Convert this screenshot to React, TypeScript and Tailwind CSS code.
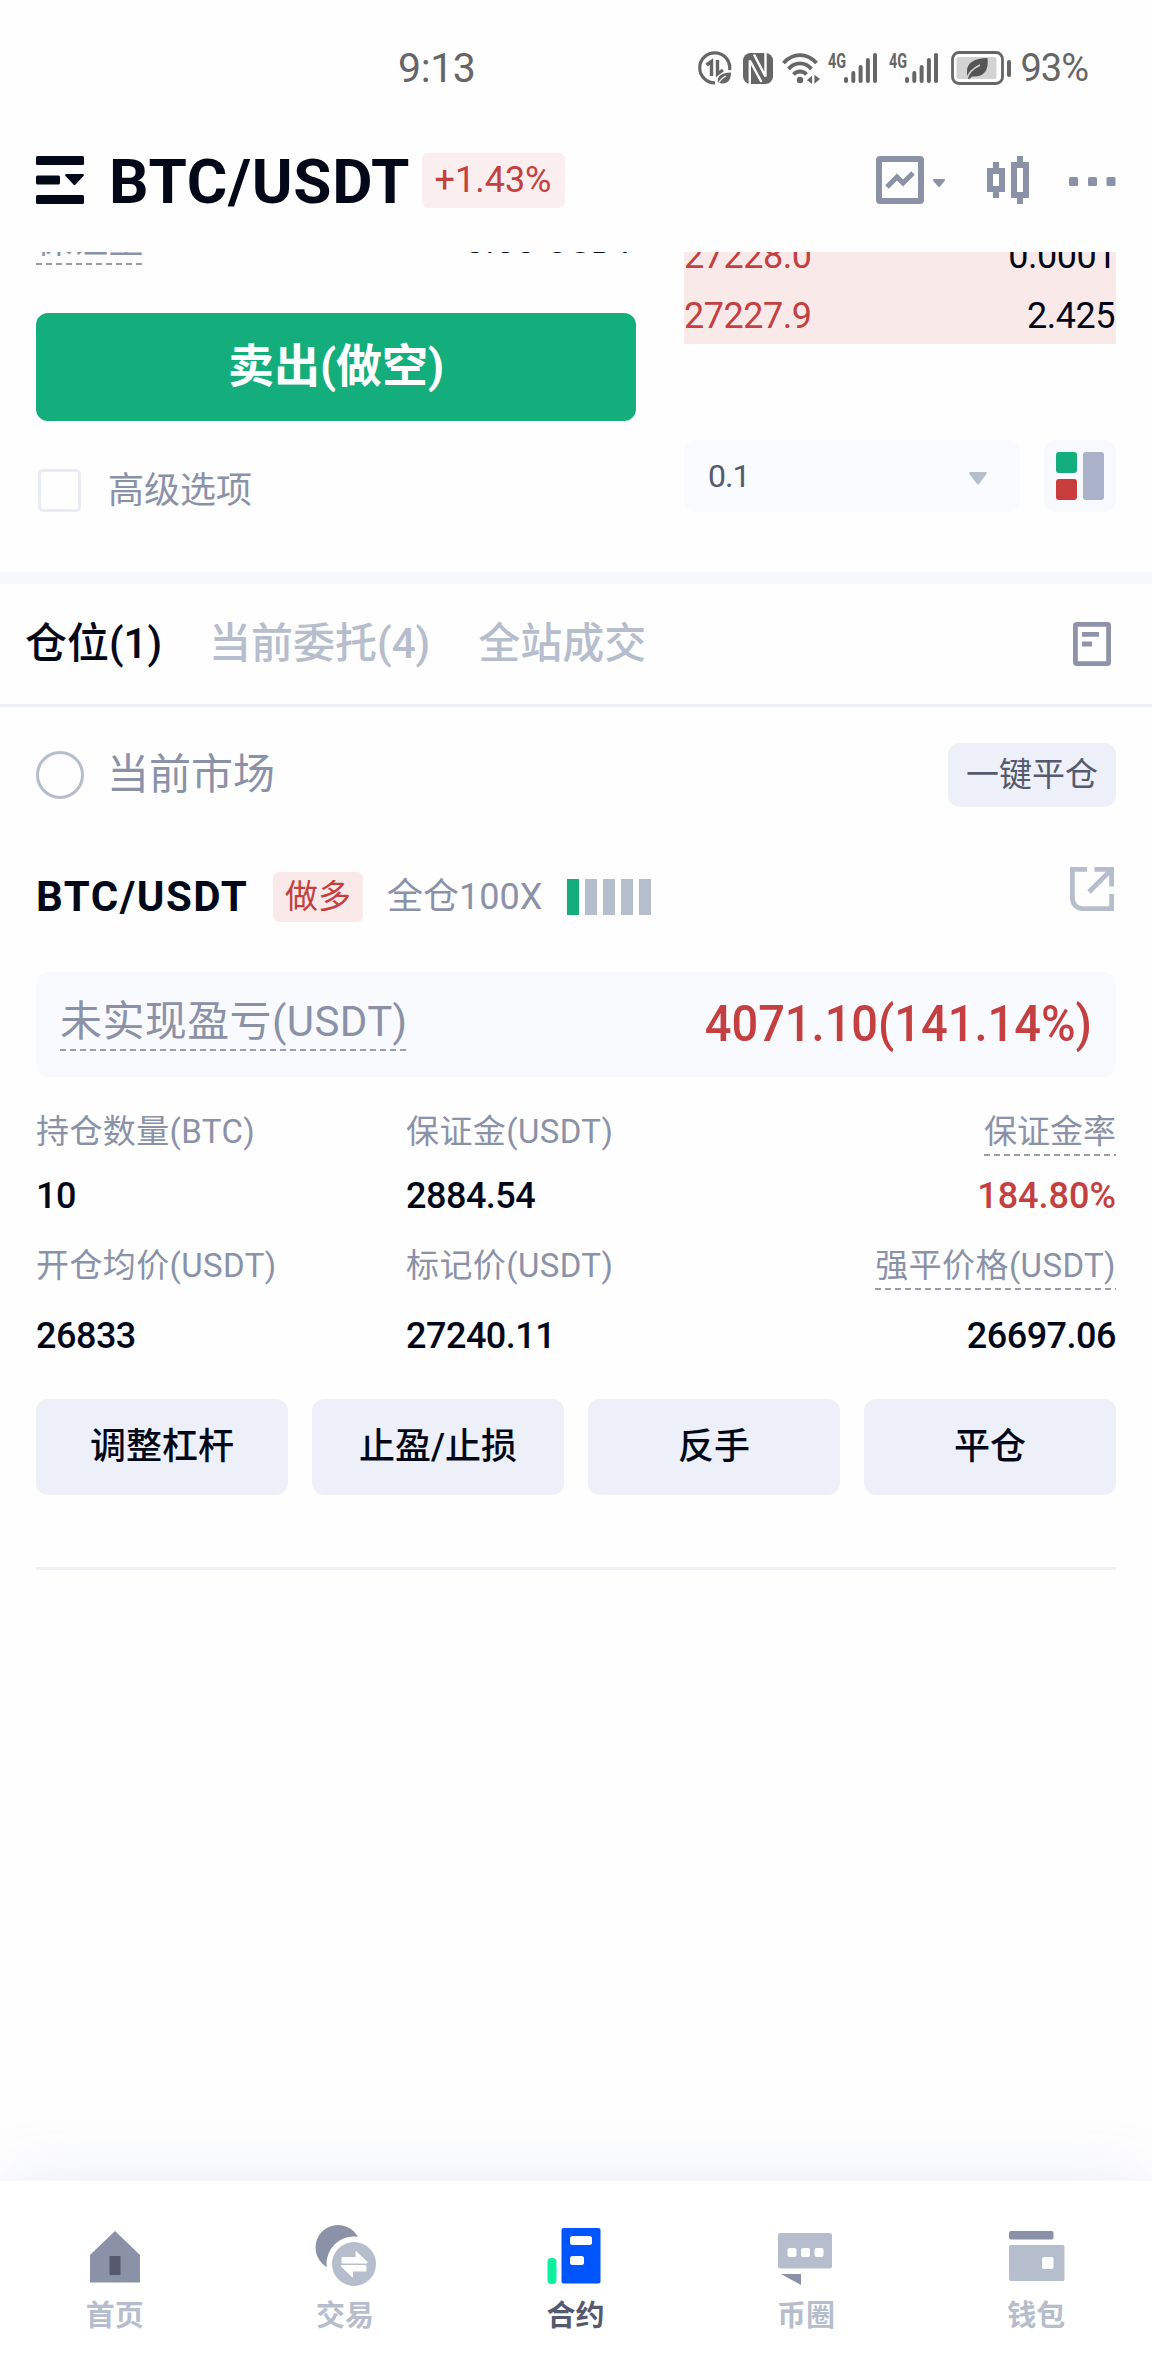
import React from 'react';

interface Stat {
  label: string;
  value: string;
  hint?: boolean;
  red?: boolean;
}

const STATS: Stat[] = [
  { label: '持仓数量(BTC)', value: '10' },
  { label: '保证金(USDT)', value: '2884.54' },
  { label: '保证金率', value: '184.80%', hint: true, red: true },
  { label: '开仓均价(USDT)', value: '26833' },
  { label: '标记价(USDT)', value: '27240.11' },
  { label: '强平价格(USDT)', value: '26697.06', hint: true },
];

const ACTIONS = ['调整杠杆', '止盈/止损', '反手', '平仓'];

const DashedLine: React.FC = () => (
  <div className="h-[2px] w-full bg-[repeating-linear-gradient(90deg,#979cae_0_6px,transparent_6px_10px)]" />
);

const SignalIcon: React.FC = () => (
  <div className="flex">
    <span className="-mt-px h-[20px] w-[16px] origin-left scale-x-[0.72] text-[20px] font-bold leading-[20px]">4G</span>
    <svg width="34" height="32" viewBox="16 0 34 32" fill="#666">
      <rect x="16" y="25" width="4" height="6" rx="2" />
      <rect x="23.3" y="19" width="4" height="12" rx="2" />
      <rect x="30.6" y="13" width="4" height="18" rx="2" />
      <rect x="37.9" y="6" width="4" height="25" rx="2" />
      <rect x="45" y="1" width="4" height="30" rx="2" />
    </svg>
  </div>
);

const StatusBar: React.FC = () => (
  <div className="flex h-[136px] items-center justify-between pl-[398px] pr-[64px] text-[#666]">
    <span className="text-[41px] leading-none tracking-[-0.4px]">9:13</span>
    <div className="flex items-center">
      <svg width="34" height="34" viewBox="0 0 34 34" fill="none" stroke="#666" strokeWidth="3.2">
        <path d="M17 31.8A15 15 0 1 1 31.6 19" />
        <path d="M8.5 14l5-3.5V25M19.5 9v14l5.5-4" strokeWidth="3.4" />
        <path d="M20 31.5c-1.5-7 4-9.5 13-10c0 7-3 11.5-9.5 11z" fill="#666" stroke="none" />
        <path d="M20 33c2-4 5-6.5 8-8" stroke="#fff" strokeWidth="1.2" />
      </svg>
      <svg className="ml-[11px]" width="30" height="31" viewBox="0 0 30 31">
        <rect width="30" height="31" rx="7.5" fill="#666" />
        <path d="M6.8 31V7.5L18.5 29M22.5 0v23.5L11 1.5" fill="none" stroke="#fff" strokeWidth="2.4" />
      </svg>
      <svg className="ml-[9px]" width="38" height="32" viewBox="0 0 38 32" fill="none" stroke="#666" strokeWidth="3.8">
        <path d="M1.5 11C11 0.5 25 0.5 34.5 11" />
        <path d="M6.5 17C13 9.5 23 9.5 29.5 17" />
        <path d="M11.5 22.5C15 18.5 21 18.5 24.5 22.5" />
        <circle cx="18" cy="28" r="3.2" fill="#666" stroke="none" />
        <path d="M25.5 28.5l4-3.5v6.5M33 24v6.5l4-3.5z" fill="#666" strokeWidth="1.2" />
      </svg>
      <div className="ml-2 flex gap-[11px]">
        <SignalIcon />
        <SignalIcon />
      </div>
      <svg className="ml-[12px]" width="60" height="34" viewBox="0 0 60 34">
        <rect x="1.5" y="1.5" width="50" height="31" rx="6.5" fill="none" stroke="#666" strokeWidth="2.8" />
        <rect x="5.5" y="6" width="40" height="22" rx="2.5" fill="#d3d3d3" />
        <rect x="56" y="9" width="4" height="17" rx="2" fill="#666" />
        <path d="M36.5 7c-13 0-21 5-20.5 14l0 7c3 0 4-1.5 5-2.5c11 1 17-5 15.5-18.5z" fill="#555" />
        <path d="M16 28c1-6 6-10.5 13-14" fill="none" stroke="#d3d3d3" strokeWidth="1.5" />
      </svg>
      <span className="ml-[9px] text-[38px] leading-none tracking-[-1px]">93%</span>
    </div>
  </div>
);

const Header: React.FC = () => (
  <header className="flex h-[116px] items-center px-9 pb-7">
    <svg width="48" height="48" viewBox="0 0 48 48" fill="#030818">
      <rect width="48" height="9" rx="1.5" />
      <rect y="19.5" width="24" height="9" rx="1.5" />
      <rect y="39" width="48" height="9" rx="1.5" />
      <path d="M30 18h17q1.5 .5 .5 2l-8 8.6q-1 1-2 0l-8-8.6q-1-1.5 .5-2z" />
    </svg>
    <h1 className="ml-[25px] w-[302px] pt-[3px] text-[62px] font-bold leading-none tracking-[0.7px]">BTC/USDT</h1>
    <span className="ml-[11px] flex h-[55px] w-[143px] items-center justify-center rounded-md bg-[#faeeee] pr-px text-[36px] leading-none text-[#c43f40]">
      +1.43%
    </span>
    <div className="ml-auto flex items-center text-[#8b92a7]">
      <svg width="70" height="48" viewBox="0 0 70 48" fill="none" stroke="currentColor">
        <rect x="3" y="3" width="42" height="42" rx="1" strokeWidth="6" />
        <path d="M11 31l10-10 6 6 10-10" strokeWidth="5" />
        <path d="M58 24h10l-5 6z" fill="currentColor" strokeWidth="2" strokeLinejoin="round" />
      </svg>
      <svg className="ml-[41px]" width="42" height="48" viewBox="0 0 42 48" fill="none" stroke="currentColor" strokeWidth="6">
        <rect x="3" y="15" width="12" height="18" />
        <path d="M9 6v8M9 34v8M33 0v8M33 40v8" />
        <rect x="27" y="9" width="12" height="30" />
      </svg>
      <svg className="ml-10 mt-[3px]" width="47" height="9" viewBox="0 0 47 9" fill="currentColor">
        <rect width="9" height="9" rx="1.5" />
        <rect x="19" width="9" height="9" rx="1.5" />
        <rect x="37.5" width="9" height="9" rx="1.5" />
      </svg>
    </div>
  </header>
);

const OrderPanel: React.FC = () => (
  <section className="flex h-[320px] justify-between overflow-hidden px-9">
    <div className="w-[600px]">
      <div className="-mt-[31px] flex justify-between text-[36px] leading-[40px]">
        <div className="text-[#8b92a7]">
          保证金
          <div className="mt-[2px]">
            <DashedLine />
          </div>
        </div>
        <span className="tracking-[0.3px]">0.00 USDT</span>
      </div>
      <button className="mt-12 flex h-[108px] w-full items-center justify-center rounded-xl bg-[#13ae7c] pb-[3px] text-[46px] font-bold leading-none text-white">
        卖出(做空)
      </button>
      <label className="mt-12 flex items-center text-[36px] leading-[42px] text-[#8b92a7]">
        <span className="ml-[2px] h-[43px] w-[43px] rounded-[5px] border-[3px] border-[#e9ecf4]" />
        <span className="ml-[27px]">高级选项</span>
      </label>
    </div>
    <div className="w-[432px]">
      <div className="-mt-7 bg-[#f9eae9] text-[36px] leading-[56px] tracking-[-0.5px]">
        <div className="flex justify-between pt-1">
          <span className="text-[#c43f40]">27228.0</span>
          <span>0.0001</span>
        </div>
        <div className="flex justify-between pt-1">
          <span className="text-[#c43f40]">27227.9</span>
          <span className="pr-px">2.425</span>
        </div>
      </div>
      <div className="mt-24 flex justify-between">
        <div className="flex h-[72px] w-[336px] items-center justify-between rounded-xl bg-[#f9fbfe] px-6 text-[32px] tracking-[-1px] text-[#565a6e]">
          0.1
          <svg className="mr-[9px] mt-1" width="18" height="13" viewBox="0 0 18 13" fill="#b6bdcc">
            <path d="M1 0h16q1.5 .5 .5 2l-7.5 10q-1 1-2 0l-7.5-10q-1-1.5 .5-2z" />
          </svg>
        </div>
        <div className="flex h-[72px] w-[72px] gap-[6px] rounded-xl bg-[#f8f9fc] p-3">
          <div className="flex flex-col gap-[6px]">
            <div className="h-[21px] w-[21px] rounded-[3px] bg-[#13ae7c]" />
            <div className="h-[21px] w-[21px] rounded-[3px] bg-[#c93c3c]" />
          </div>
          <div className="h-12 w-[21px] rounded-[3px] bg-[#abb3cb]" />
        </div>
      </div>
    </div>
  </section>
);

const Tabs: React.FC = () => (
  <nav className="flex h-[123px] items-center border-b-[3px] border-[#edeff7] pl-[25px] pr-[41px] text-[42px] font-medium leading-none text-[#b6bdcc]">
    <span className="text-[#030818]">仓位(1)</span>
    <span className="ml-[47px]">当前委托(4)</span>
    <span className="ml-[48px]">全站成交</span>
    <svg className="ml-auto" width="38" height="44" viewBox="0 0 38 44" fill="none" stroke="#8e93a7" strokeWidth="4.8">
      <rect x="2.4" y="2.4" width="33.2" height="39.2" rx="1" />
      <path d="M9 12.3h17M9 22h10" />
    </svg>
  </nav>
);

const Position: React.FC = () => (
  <section className="px-9">
    <div className="mt-9 flex h-16 items-center">
      <span className="h-12 w-12 rounded-full border-[3px] border-[#b6bdcc]" />
      <span className="ml-[23px] text-[42px] leading-none text-[#8b92a7]">当前市场</span>
      <button className="ml-auto h-16 w-[168px] rounded-xl bg-[#edf0f9] pb-[2px] text-[33px] leading-none text-[#565a6e]">
        一键平仓
      </button>
    </div>

    <div className="mt-[60px] flex h-[60px] items-center">
      <h2 className="w-[237px] text-[42px] font-bold leading-none tracking-[1.5px]">BTC/USDT</h2>
      <span className="flex h-[50px] w-[90px] items-center justify-center rounded-md bg-[#f9eae9] pb-[2px] text-[33px] leading-none text-[#c43f40]">
        做多
      </span>
      <span className="ml-6 text-[36px] leading-none text-[#8b92a7]">全仓100X</span>
      <div className="ml-[25px] flex gap-[6px]">
        <div className="h-9 w-3 bg-[#13ae7c]" />
        <div className="h-9 w-3 bg-[#b6bdcc]" />
        <div className="h-9 w-3 bg-[#b6bdcc]" />
        <div className="h-9 w-3 bg-[#b6bdcc]" />
        <div className="h-9 w-3 bg-[#b6bdcc]" />
      </div>
      <svg className="ml-auto mr-[2px] self-start" width="44" height="44" viewBox="0 0 44 44" fill="none" stroke="#b6bdcc" strokeWidth="4.8">
        <path d="M17 2.4H2.4V32q1 8.500 9.5 9.6H41.6V27" />
        <path d="M24.5 2.4H41.6V19.5M41 3L19 25" />
      </svg>
    </div>

    <div className="mt-[45px] flex h-[105px] items-center justify-between rounded-xl bg-[#f9fafe] px-6 leading-none">
      <div className="pt-[3px] text-[42px] tracking-[0.4px] text-[#8b92a7]">
        未实现盈亏(USDT)
        <div className="mt-[6px]">
          <DashedLine />
        </div>
      </div>
      <span className="origin-right scale-x-[0.94] pb-[2px] text-[50px] font-medium text-[#c43f40]">4071.10(141.14%)</span>
    </div>

    <div className="mt-[35px] grid grid-cols-[370px_1fr_auto] gap-y-[31px] leading-[40px]">
      {STATS.map((stat, i) => (
        <div key={stat.label} className={i % 3 === 2 ? 'flex flex-col items-end' : ''}>
          <div className={`h-[44px] text-[33px] text-[#8b92a7] ${stat.label.includes('(') ? 'tracking-[0.4px]' : ''}`}>
            {stat.label}
            {stat.hint && (
              <div className="mt-[2px]">
                <DashedLine />
              </div>
            )}
          </div>
          <div
            className={`pt-[2px] text-[36px] font-medium leading-[38px] ${i > 2 ? 'mt-[25px]' : 'mt-[19px]'} ${
              stat.red ? 'text-[#c43f40]' : 'tracking-[-0.5px]'
            }`}
          >
            {stat.value}
          </div>
        </div>
      ))}
    </div>

    <div className="mt-11 grid grid-cols-4 gap-6">
      {ACTIONS.map((action) => (
        <button key={action} className="h-24 rounded-xl bg-[#edf0f9] text-[36px] font-medium leading-none">
          {action}
        </button>
      ))}
    </div>
    <div className="mt-[72px] h-[3px] bg-[#eff1f7]" />
  </section>
);

const HomeIcon: React.FC = () => (
  <svg width="64" height="64" viewBox="0 0 64 64">
    <path d="M32 11l25 24v27.5H7V35z" fill="#8b92a7" />
    <rect x="26.5" y="36" width="11" height="19" fill="#565a6e" />
  </svg>
);

const TradeIcon: React.FC = () => (
  <svg width="64" height="66" viewBox="0 0 64 66">
    <circle cx="24" cy="27.5" r="22.5" fill="#8b92a7" />
    <circle cx="40" cy="44" r="27.5" fill="#fff" />
    <circle cx="40" cy="44" r="22" fill="#b6bdcc" />
    <path
      d="M28 37.5h14v-6l11 10.5v1H28zM52 45.5v5.5H38.5v6l-11-10.5v-1z"
      fill="#fff"
      stroke="#fff"
      strokeLinejoin="round"
    />
  </svg>
);

const ContractIcon: React.FC = () => (
  <svg width="64" height="64" viewBox="0 0 64 64">
    <rect x="3.5" y="38" width="9" height="26" rx="4" fill="#0df09f" />
    <rect x="17.5" y="8" width="39" height="55.5" rx="2" fill="#0055ff" />
    <rect x="26" y="16" width="22" height="9" rx="2.5" fill="#fff" />
    <rect x="26" y="36" width="14" height="9" rx="2.5" fill="#fff" />
  </svg>
);

const ChatIcon: React.FC = () => (
  <svg width="64" height="66" viewBox="0 0 64 66">
    <rect x="4" y="13" width="54" height="35.5" rx="2.5" fill="#b6bdcc" />
    <path d="M7 54h20v11z" fill="#8b92a7" />
    <rect x="13.5" y="28" width="9" height="9" rx="2" fill="#fff" />
    <rect x="27" y="28" width="9" height="9" rx="2" fill="#fff" />
    <rect x="40.5" y="28" width="9" height="9" rx="2" fill="#fff" />
  </svg>
);

const WalletIcon: React.FC = () => (
  <svg width="64" height="64" viewBox="0 0 64 64">
    <rect x="4" y="11" width="44.5" height="8.5" rx="2" fill="#8b92a7" />
    <rect x="4" y="25" width="55.5" height="36" rx="2" fill="#b6bdcc" />
    <rect x="37" y="37" width="11.5" height="12" rx="2" fill="#fff" />
  </svg>
);

const NAV_ITEMS = [
  { label: '首页', Icon: HomeIcon },
  { label: '交易', Icon: TradeIcon },
  { label: '合约', Icon: ContractIcon, active: true },
  { label: '币圈', Icon: ChatIcon },
  { label: '钱包', Icon: WalletIcon },
];

const BottomNav: React.FC = () => (
  <footer className="mt-auto grid h-[195px] grid-cols-5 bg-white pt-[39px] shadow-[0_-6px_70px_-6px_rgba(90,110,190,0.12)]">
    {NAV_ITEMS.map(({ label, Icon, active }) => (
      <div key={label} className="flex flex-col items-center">
        <div className="h-[82px]">
          <Icon />
        </div>
        <span className={`mr-px text-[29px] font-bold leading-none ${active ? 'text-[#565a6e]' : 'text-[#b6bdcc]'}`}>
          {label}
        </span>
      </div>
    ))}
  </footer>
);

const App: React.FC = () => {
  return (
    <div className="flex h-[2376px] w-[1152px] flex-col overflow-hidden bg-[#fefefe] font-[Roboto,'Noto_Sans_CJK_SC',sans-serif] text-[#030818]">
      <StatusBar />
      <Header />
      <OrderPanel />
      <div className="h-3 bg-[#f6f9fc]" />
      <Tabs />
      <Position />
      <BottomNav />
    </div>
  );
};

export default App;
